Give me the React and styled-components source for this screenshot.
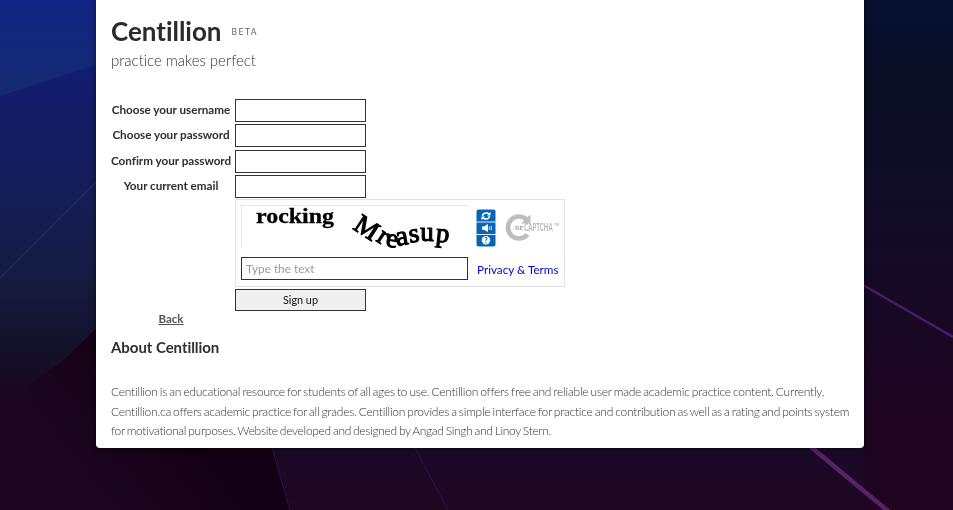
import React from "react";
import styled, { createGlobalStyle } from "styled-components";

const GlobalStyle = createGlobalStyle`
  * { box-sizing: border-box; }
  html { background: #1b0520; }
  html, body { margin: 0; height: 100%; overflow: hidden; }
  body { font-family: Lato, "Liberation Sans", sans-serif; font-variant-ligatures: none; }
`;

const Backdrop = styled.svg`
  position: fixed;
  inset: 0;
  width: 953px;
  height: 510px;
  z-index: -1;
`;

const Card = styled.main`
  width: 768px;
  height: 448px;
  margin-left: 96px;
  padding: 0 15px;
  background: #fff;
  border-radius: 0 0 4px 4px;
  box-shadow: 0 1px 6px rgba(0, 0, 0, 0.5);
  color: #2e2e2e;
`;

const Header = styled.header`
  height: 99px;
  padding-top: 15px;
`;

const Brand = styled.div`
  display: flex;
  align-items: center;
  gap: 10px;
  height: 32px;
`;

const Title = styled.h1`
  margin: 0;
  font-size: 26px;
  line-height: 32px;
  font-weight: 700;
  letter-spacing: -0.02px;
  color: #2b2b2b;
`;

const Beta = styled.span`
  padding-top: 2px;
  font-size: 8.5px;
  letter-spacing: 1.5px;
  color: #666;
`;

const Tagline = styled.p`
  margin: 3px 0 0;
  font-size: 15px;
  line-height: 20px;
  font-weight: 300;
  letter-spacing: -0.03px;
  color: #333;
`;

const Form = styled.form`
  display: grid;
  grid-template-columns: 120px 330px;
  grid-template-rows: 23px 23px 23px 21.6px 87.4px 23px 12px;
  column-gap: 4px;
  row-gap: 2.4px;
  height: 234px;
`;

const Label = styled.label`
  font-size: 11.7px;
  font-weight: 700;
  line-height: 21px;
  letter-spacing: -0.02px;
  text-align: center;
  white-space: nowrap;
`;

const Field = styled.input`
  width: ${(p) => p.$width};
  height: 23px;
  margin: 0;
  padding: 0 4px;
  border: 1px solid #333;
  border-radius: 0;
  background: #fff;
  font: 400 ${(p) => p.$size || "12px"} Lato, sans-serif;
  color: #333;
  &::placeholder { color: #999; opacity: 1; }
`;

const Captcha = styled.section`
  display: grid;
  grid-template-columns: 227px 1fr;
  grid-template-rows: 43px 23px;
  row-gap: 9px;
  column-gap: 9px;
  height: 88px;
  padding: 5px 5px 0;
  border: 1px solid #e2e2e2;
`;

const Challenge = styled.svg`
  width: 227px;
  height: 43px;
  border: solid #e5e5e5;
  border-width: 1px 0 0 1px;
  overflow: visible;
`;

const CaptchaTools = styled.div`
  display: flex;
  gap: 10px;
  padding-top: 4px;
  margin-left: -1px;
`;

const ToolStack = styled.svg`
  width: 20px;
  height: 38px;
`;

const CaptchaLogo = styled.svg`
  width: 54px;
  height: 30px;
  margin-top: 3px;
  overflow: visible;
`;

const Terms = styled.a`
  font-size: 11.7px;
  line-height: 25px;
  color: #0000e0;
  white-space: nowrap;
`;

const Submit = styled.button`
  grid-column: 2;
  width: 131px;
  height: 22px;
  padding: 0 0 1px;
  border: 1px solid #333;
  background: #efefef;
  color: #111;
  font: 400 10.8px Lato, sans-serif;
`;

const Back = styled.a`
  justify-self: center;
  margin-top: -2px;
  font-size: 11.5px;
  line-height: 13px;
  font-weight: 700;
  color: #555;
  text-decoration: underline;
`;

const AboutTitle = styled.h2`
  margin: 4px 0 0;
  font-size: 15px;
  line-height: 20px;
  font-weight: 700;
  letter-spacing: -0.05px;
`;

const About = styled.p`
  margin: 25px 0 0;
  font-size: 12px;
  line-height: 19.5px;
  font-weight: 300;
  color: #333;
  white-space: nowrap;
`;

const Line = styled.span`
  display: block;
  letter-spacing: ${(p) => p.$tracking};
  word-spacing: -0.9px;
`;

const letters = [
  { c: "M", x: 120, y: 29, r: 33, s: 27 },
  { c: "r", x: 137, y: 37, r: 33, s: 27 },
  { c: "e", x: 149, y: 41, r: 10, s: 27 },
  { c: "a", x: 161, y: 39, r: -10, s: 28 },
  { c: "s", x: 173, y: 36, r: -8, s: 27 },
  { c: "u", x: 185, y: 35, r: 0, s: 27 },
  { c: "p", x: 200, y: 36, r: 6, s: 27 },
];

function Background() {
  return (
    <Backdrop viewBox="0 0 953 510" preserveAspectRatio="none" aria-hidden="true">
      <defs>
        <linearGradient id="left" x1="0" y1="0" x2="0" y2="1">
          <stop offset="0" stopColor="#10238a" />
          <stop offset=".2" stopColor="#141c69" />
          <stop offset=".4" stopColor="#151e55" />
          <stop offset=".55" stopColor="#151b40" />
          <stop offset=".68" stopColor="#14122a" />
          <stop offset=".78" stopColor="#1b0520" />
          <stop offset="1" stopColor="#1d0420" />
        </linearGradient>
        <linearGradient id="right" x1="0" y1="0" x2="0" y2="1">
          <stop offset="0" stopColor="#071032" />
          <stop offset=".18" stopColor="#0a0e22" />
          <stop offset=".35" stopColor="#100d27" />
          <stop offset=".55" stopColor="#150a25" />
          <stop offset=".8" stopColor="#1e0421" />
          <stop offset="1" stopColor="#200420" />
        </linearGradient>
        <linearGradient id="panel" x1="0" y1="0" x2="0" y2="1">
          <stop offset="0" stopColor="#112485" />
          <stop offset="1" stopColor="#142b70" />
        </linearGradient>
        <linearGradient id="shade" x1="110" y1="330" x2="20" y2="400" gradientUnits="userSpaceOnUse">
          <stop offset="0" stopColor="#140014" />
          <stop offset=".5" stopColor="#18031a" />
          <stop offset="1" stopColor="#1b0520" />
        </linearGradient>
        <linearGradient id="floor" x1="0" y1="0" x2="0" y2="1">
          <stop offset="0" stopColor="#1a0a2b" />
          <stop offset="1" stopColor="#200621" />
        </linearGradient>
      </defs>
      <rect width="480" height="510" fill="url(#left)" />
      <rect x="480" width="473" height="510" fill="url(#right)" />
      <path d="M0 0H110V60L0 96Z" fill="url(#panel)" />
      <path d="M96 182L0 278" stroke="#315477" strokeWidth=".7" opacity=".65" />
      <path d="M110 315L64 360L20 392L0 401V510H290V448H110Z" fill="url(#shade)" />
      <path d="M270 440H864V510H290Z" fill="url(#floor)" />
      <path d="M272 448L290 510M415 448L448 510" stroke="#30215a" strokeWidth="1" opacity=".7" fill="none" />
      <path d="M863 285L953 337" stroke="#4b196f" strokeWidth="2.5" />
      <path d="M811 447L888 511" stroke="#582269" strokeWidth="4.5" />
    </Backdrop>
  );
}

export default function App() {
  return (
    <>
      <GlobalStyle />
      <Background />
      <Card>
        <Header>
          <Brand><Title>Centillion</Title><Beta>BETA</Beta></Brand>
          <Tagline>practice makes perfect</Tagline>
        </Header>
        <Form onSubmit={(e) => e.preventDefault()}>
          <Label htmlFor="username">Choose your username</Label><Field id="username" $width="131px" />
          <Label htmlFor="password">Choose your password</Label><Field id="password" type="password" $width="131px" />
          <Label htmlFor="confirm">Confirm your password</Label><Field id="confirm" type="password" $width="131px" />
          <Label htmlFor="email">Your current email</Label><Field id="email" $width="131px" />
          <span />
          <Captcha>
            <Challenge viewBox="0 0 226 42">
              <text x="14" y="17" fontFamily="Liberation Serif, serif" fontWeight="700" fontSize="21" textLength="78" lengthAdjust="spacingAndGlyphs" stroke="#000" strokeWidth=".3">rocking</text>
              {letters.map((l) => (
                <text key={l.c} transform={`translate(${l.x} ${l.y}) rotate(${l.r})`} textAnchor="middle" fontFamily="Liberation Serif, serif" fontWeight="400" fontSize={l.s} stroke="#000" strokeWidth="1.1">{l.c}</text>
              ))}
            </Challenge>
            <CaptchaTools>
              <ToolStack viewBox="0 0 20 38">
                <rect x=".5" y=".5" width="19" height="37" rx="2" fill="#0765b3" />
                <path d="M0 13H20M0 25.5H20" stroke="#dcecf8" strokeWidth="1.2" />
                <path d="M6.5 7Q7 3.5 11 4L13 5M13.5 7Q13 10.5 9 10L7 9" fill="none" stroke="#fff" strokeWidth="1.5" />
                <path d="M14.5 2.8V6.5H11ZM5.5 11.2V7.5H9ZM6 17.5H8L12 15V23L8 20.7H6Z" fill="#fff" />
                <path d="M13.3 17.5V20.7M15.3 16.8V21.3" stroke="#d8eaff" />
                <circle cx="10" cy="31.3" r="4.2" fill="#fff" />
                <text x="10" y="34" textAnchor="middle" fontFamily="Lato, sans-serif" fontSize="7.5" fontWeight="900" fill="#0765b3">?</text>
              </ToolStack>
              <CaptchaLogo viewBox="0 0 54 30">
                <path d="M20.5 7.5A11 11 0 1 0 21.5 22.5" fill="none" stroke="#bdbdbd" strokeWidth="4.6" />
                <path d="M24.5 2.5V11.5H15Z" fill="#bdbdbd" />
                <path d="M9 12.5H19V18H9Z" fill="#fff" />
                <text x="9" y="17.5" fontFamily="Lato, sans-serif" fontWeight="900" fontSize="6" fill="#aaa" textLength="8.5" lengthAdjust="spacingAndGlyphs">RE</text>
                <text x="18.3" y="18.8" fontFamily="Lato, sans-serif" fontWeight="700" fontSize="10.5" fill="#b5b5b5" textLength="28.5" lengthAdjust="spacingAndGlyphs">CAPTCHA</text>
                <text x="48.3" y="13.5" fontFamily="Lato, sans-serif" fontSize="3.2" fill="#999">TM</text>
              </CaptchaLogo>
            </CaptchaTools>
            <Field $width="227px" $size="11.8px" placeholder="Type the text" />
            <Terms>Privacy &amp; Terms</Terms>
          </Captcha>
          <Submit>Sign up</Submit>
          <Back>Back</Back>
        </Form>
        <AboutTitle>About Centillion</AboutTitle>
        <About>
          <Line $tracking="-0.222px">Centillion is an educational resource for students of all ages to use. Centillion offers free and reliable user made academic practice content. Currently,</Line>
          <Line $tracking="-0.242px">Centillion.ca offers academic practice for all grades. Centillion provides a simple interface for practice and contribution as well as a rating and points system</Line>
          <Line $tracking="-0.305px">for motivational purposes. Website developed and designed by Angad Singh and Linoy Stern.</Line>
        </About>
      </Card>
    </>
  );
}
